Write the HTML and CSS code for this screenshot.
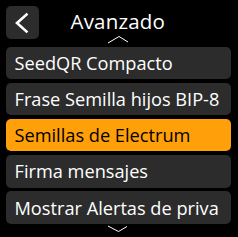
FILE: index.html
```html
<!DOCTYPE html>
<html>
<head>
<meta charset="utf-8">
<link rel="stylesheet" href="styles.css">
</head>
<body>
<div class="screen">
  <div class="topbar">
    <div class="back">
      <svg width="33" height="33" viewBox="0 0 33 33"><polyline points="20.5,8.5 11,17 20.5,25.5" fill="none" stroke="#fff" stroke-width="2.6" stroke-linecap="square"/></svg>
    </div>
    <div class="title">Avanzado</div>
  </div>
  <svg class="chev up" width="24" height="10" viewBox="0 0 24 10"><polyline points="2,8 13,1.5 22,7" fill="none" stroke="#fff" stroke-width="1"/></svg>
  <div class="list">
    <div class="item"><span class="label">SeedQR Compacto</span></div>
    <div class="item"><span class="label">Frase Semilla hijos BIP-8</span></div>
    <div class="item selected"><span class="label">Semillas de Electrum</span></div>
    <div class="item"><span class="label">Firma mensajes</span></div>
    <div class="item"><span class="label">Mostrar Alertas de priva</span></div>
  </div>
  <svg class="chev down" width="24" height="10" viewBox="0 0 24 10"><polyline points="2,2 12.5,7.5 21,2.5" fill="none" stroke="#fff" stroke-width="1"/></svg>
</div>
</body>
</html>
```
FILE: styles.css
```css
html, body {
  margin: 0;
  padding: 0;
  background: #000;
}
.screen {
  position: relative;
  width: 238px;
  height: 237px;
  overflow: hidden;
  background: #000;
  font-family: "Open Sans", "Noto Sans", sans-serif;
  color: #fff;
}
.topbar {
  height: 46.5px;
  display: flex;
  align-items: flex-start;
  padding: 6px 0 0 6px;
  box-sizing: border-box;
}
.back {
  width: 33px;
  height: 33px;
  border-radius: 5px;
  background: #2c2c2c;
  flex: none;
}
.back svg { display: block; }
.title {
  margin-left: 31.5px;
  font-size: 20.5px;
  line-height: 30px;
  letter-spacing: 0.2px;
}
.chev {
  position: absolute;
  display: block;
}
.chev.up { left: 106px; top: 35px; }
.chev.down { left: 106px; top: 224px; }
.list {
  display: flex;
  flex-direction: column;
  gap: 3.7px;
  padding: 0 7px 0 6px;
}
.item {
  height: 32.5px;
  border-radius: 5px;
  background: #2c2c2c;
  display: flex;
  align-items: center;
  padding: 0 4px 0 8.5px;
  white-space: nowrap;
}
.label {
  display: block;
  font-size: 18.2px;
  line-height: 24px;
}
.item.selected {
  background: #ff9f0a;
  color: #000;
}
```
